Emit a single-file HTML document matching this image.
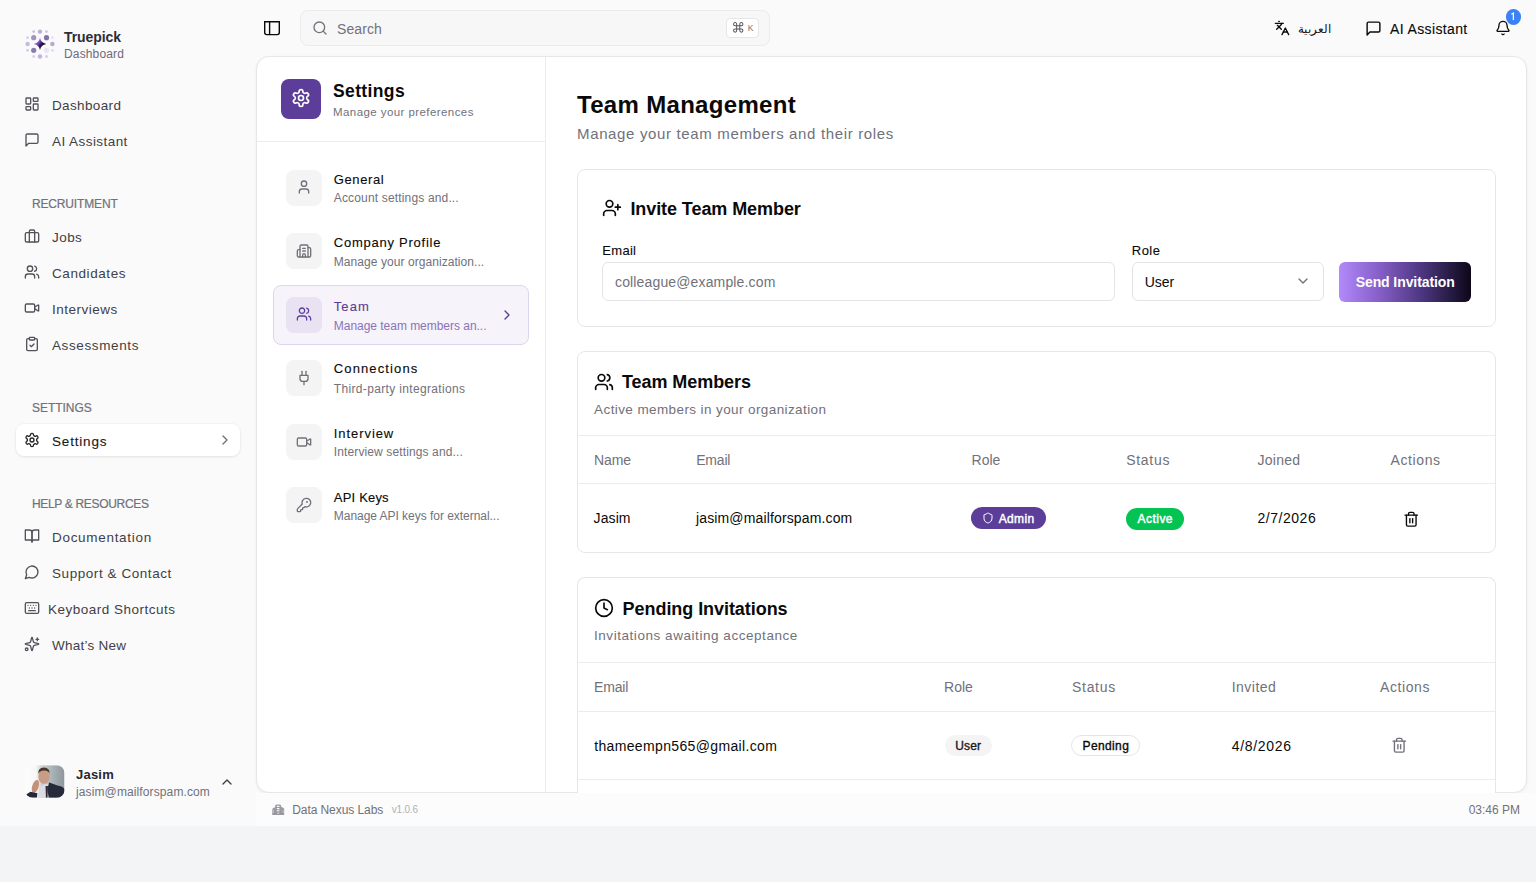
<!DOCTYPE html>
<html><head><meta charset="utf-8"><title>Team Management</title>
<style>
html,body{margin:0;padding:0;}
body{width:1536px;height:882px;position:relative;overflow:hidden;background:#fafafa;font-family:"Liberation Sans",sans-serif;}
.t{position:absolute;white-space:nowrap;line-height:1;}
.b{position:absolute;}
.i{position:absolute;overflow:visible;}
</style></head><body>
<div class="b" style="left:0px;top:826px;width:1536px;height:56px;background:#f3f4f6;"></div>
<div class="b" style="left:256px;top:793px;width:1280px;height:33px;background:#fcfcfc;"></div>
<div class="b" style="left:256px;top:56px;width:1271px;height:737px;background:#fff;border:1px solid #e7e7e9;border-radius:13px;box-shadow:0 1px 3px rgba(0,0,0,0.06);box-sizing:border-box;"></div>
<div class="b" style="left:545px;top:57px;width:1px;height:736px;background:#ececee;"></div>
<div class="b" style="left:257px;top:140.5px;width:288px;height:1px;background:#ececee;"></div>
<svg class="i" style="left:0;top:0;width:80px;height:80px" viewBox="0 0 80 80"><defs><linearGradient id="sg" x1="0.05" y1="0.2" x2="0.85" y2="0.8"><stop offset="0" stop-color="#b88aff"/><stop offset="0.3" stop-color="#9465ea"/><stop offset="0.6" stop-color="#3a2070"/><stop offset="0.8" stop-color="#0c0518"/><stop offset="1" stop-color="#05020a"/></linearGradient></defs><circle cx="33.7" cy="31.6" r="1.4" fill="#cbbfe0"/><circle cx="40.0" cy="31.6" r="2.2" fill="#bcaed8"/><circle cx="46.5" cy="31.6" r="1.4" fill="#cfc4e4"/><circle cx="27.6" cy="37.7" r="1.4" fill="#d6cdea"/><circle cx="33.7" cy="37.7" r="2.6" fill="#a494c6"/><circle cx="46.5" cy="37.7" r="2.6" fill="#8272a8"/><circle cx="52.4" cy="37.7" r="1.4" fill="#e8e1f4"/><circle cx="27.6" cy="44.0" r="2.2" fill="#c7b9e0"/><circle cx="52.4" cy="44.0" r="2.2" fill="#b8a8d6"/><circle cx="27.6" cy="50.3" r="1.4" fill="#d4c9e8"/><circle cx="33.7" cy="50.3" r="2.6" fill="#8a7cae"/><circle cx="46.5" cy="50.3" r="2.6" fill="#ebe4f7"/><circle cx="52.4" cy="50.3" r="1.4" fill="#e2d9f2"/><circle cx="33.7" cy="56.5" r="1.4" fill="#d8cdec"/><circle cx="40.0" cy="56.5" r="2.2" fill="#c3b3e0"/><circle cx="46.5" cy="56.5" r="1.4" fill="#d6cbea"/><path d="M40 37.6 Q40.8 43 46.2 43.9 Q40.8 44.8 40 50 Q39.2 44.8 33.6 43.9 Q39.2 43 40 37.6Z" fill="url(#sg)"/></svg>
<div class="t" style="top:30.15px;font-size:14px;color:#2f2c3a;left:64px;font-weight:700;letter-spacing:-0.070px;">Truepick</div>
<div class="t" style="top:47.84px;font-size:12px;color:#6e6a80;left:64px;letter-spacing:0.144px;">Dashboard</div>
<svg class="i" style="left:24px;top:96px;width:16px;height:16px;color:#52525b;" viewBox="0 0 24 24" fill="none" stroke="currentColor" stroke-width="2" stroke-linecap="round" stroke-linejoin="round"><rect width="7" height="9" x="3" y="3" rx="1"/><rect width="7" height="5" x="14" y="3" rx="1"/><rect width="7" height="9" x="14" y="12" rx="1"/><rect width="7" height="5" x="3" y="16" rx="1"/></svg>
<div class="t" style="top:98.57px;font-size:13.5px;color:#3f3f46;left:52px;letter-spacing:0.367px;">Dashboard</div>
<svg class="i" style="left:24px;top:132px;width:16px;height:16px;color:#52525b;" viewBox="0 0 24 24" fill="none" stroke="currentColor" stroke-width="2" stroke-linecap="round" stroke-linejoin="round"><path d="M21 15a2 2 0 0 1-2 2H7l-4 4V5a2 2 0 0 1 2-2h14a2 2 0 0 1 2 2z"/></svg>
<div class="t" style="top:134.57px;font-size:13.5px;color:#3f3f46;left:52px;letter-spacing:0.439px;">AI Assistant</div>
<div class="t" style="top:197.84px;font-size:12px;color:#71717a;left:32px;letter-spacing:-0.159px;-webkit-text-stroke:0.2px currentColor;">RECRUITMENT</div>
<svg class="i" style="left:24px;top:228px;width:16px;height:16px;color:#52525b;" viewBox="0 0 24 24" fill="none" stroke="currentColor" stroke-width="2" stroke-linecap="round" stroke-linejoin="round"><rect width="20" height="14" x="2" y="7" rx="2" ry="2"/><path d="M16 21V5a2 2 0 0 0-2-2h-4a2 2 0 0 0-2 2v16"/></svg>
<div class="t" style="top:230.57px;font-size:13.5px;color:#3f3f46;left:52px;letter-spacing:0.442px;">Jobs</div>
<svg class="i" style="left:24px;top:264px;width:16px;height:16px;color:#52525b;" viewBox="0 0 24 24" fill="none" stroke="currentColor" stroke-width="2" stroke-linecap="round" stroke-linejoin="round"><path d="M16 21v-2a4 4 0 0 0-4-4H6a4 4 0 0 0-4 4v2"/><circle cx="9" cy="7" r="4"/><path d="M22 21v-2a4 4 0 0 0-3-3.87"/><path d="M16 3.13a4 4 0 0 1 0 7.75"/></svg>
<div class="t" style="top:266.57px;font-size:13.5px;color:#3f3f46;left:52px;letter-spacing:0.576px;">Candidates</div>
<svg class="i" style="left:24px;top:300px;width:16px;height:16px;color:#52525b;" viewBox="0 0 24 24" fill="none" stroke="currentColor" stroke-width="2" stroke-linecap="round" stroke-linejoin="round"><path d="m16 13 5.223 3.482a.5.5 0 0 0 .777-.416V7.87a.5.5 0 0 0-.752-.432L16 10.5"/><rect x="2" y="6" width="14" height="12" rx="2"/></svg>
<div class="t" style="top:302.57px;font-size:13.5px;color:#3f3f46;left:52px;letter-spacing:0.510px;">Interviews</div>
<svg class="i" style="left:24px;top:336px;width:16px;height:16px;color:#52525b;" viewBox="0 0 24 24" fill="none" stroke="currentColor" stroke-width="2" stroke-linecap="round" stroke-linejoin="round"><rect width="8" height="4" x="8" y="2" rx="1" ry="1"/><path d="M16 4h2a2 2 0 0 1 2 2v14a2 2 0 0 1-2 2H6a2 2 0 0 1-2-2V6a2 2 0 0 1 2-2h2"/><path d="m9 14 2 2 4-4"/></svg>
<div class="t" style="top:338.57px;font-size:13.5px;color:#3f3f46;left:52px;letter-spacing:0.618px;">Assessments</div>
<div class="t" style="top:401.84px;font-size:12px;color:#71717a;left:32px;letter-spacing:-0.036px;-webkit-text-stroke:0.2px currentColor;">SETTINGS</div>
<div class="b" style="left:16px;top:424px;width:224px;height:32px;background:#fff;border-radius:8px;box-shadow:0 1px 3px rgba(0,0,0,0.08),0 0 0 1px rgba(0,0,0,0.02);"></div>
<svg class="i" style="left:24px;top:432px;width:16px;height:16px;color:#27272a;" viewBox="0 0 24 24" fill="none" stroke="currentColor" stroke-width="2" stroke-linecap="round" stroke-linejoin="round"><path d="M12.22 2h-.44a2 2 0 0 0-2 2v.18a2 2 0 0 1-1 1.73l-.43.25a2 2 0 0 1-2 0l-.15-.08a2 2 0 0 0-2.73.73l-.22.38a2 2 0 0 0 .73 2.73l.15.1a2 2 0 0 1 1 1.72v.51a2 2 0 0 1-1 1.74l-.15.09a2 2 0 0 0-.73 2.73l.22.38a2 2 0 0 0 2.73.73l.15-.08a2 2 0 0 1 2 0l.43.25a2 2 0 0 1 1 1.73V20a2 2 0 0 0 2 2h.44a2 2 0 0 0 2-2v-.18a2 2 0 0 1 1-1.73l.43-.25a2 2 0 0 1 2 0l.15.08a2 2 0 0 0 2.73-.73l.22-.39a2 2 0 0 0-.73-2.73l-.15-.08a2 2 0 0 1-1-1.74v-.5a2 2 0 0 1 1-1.74l.15-.09a2 2 0 0 0 .73-2.73l-.22-.38a2 2 0 0 0-2.73-.73l-.15.08a2 2 0 0 1-2 0l-.43-.25a2 2 0 0 1-1-1.73V4a2 2 0 0 0-2-2z"/><circle cx="12" cy="12" r="3"/></svg>
<div class="t" style="top:434.57px;font-size:13.5px;color:#18181b;left:52px;letter-spacing:0.813px;-webkit-text-stroke:0.1px currentColor;">Settings</div>
<svg class="i" style="left:217px;top:432.2px;width:16px;height:16px;color:#71717a;" viewBox="0 0 24 24" fill="none" stroke="currentColor" stroke-width="2" stroke-linecap="round" stroke-linejoin="round"><path d="m9 18 6-6-6-6"/></svg>
<div class="t" style="top:497.84px;font-size:12px;color:#71717a;left:32px;letter-spacing:-0.325px;-webkit-text-stroke:0.2px currentColor;">HELP &amp; RESOURCES</div>
<svg class="i" style="left:24px;top:528px;width:16px;height:16px;color:#52525b;" viewBox="0 0 24 24" fill="none" stroke="currentColor" stroke-width="2" stroke-linecap="round" stroke-linejoin="round"><path d="M2 3h6a4 4 0 0 1 4 4v14a3 3 0 0 0-3-3H2z"/><path d="M22 3h-6a4 4 0 0 0-4 4v14a3 3 0 0 1 3-3h7z"/></svg>
<div class="t" style="top:530.57px;font-size:13.5px;color:#3f3f46;left:52px;letter-spacing:0.695px;">Documentation</div>
<svg class="i" style="left:24px;top:564px;width:16px;height:16px;color:#52525b;" viewBox="0 0 24 24" fill="none" stroke="currentColor" stroke-width="2" stroke-linecap="round" stroke-linejoin="round"><path d="M7.9 20A9 9 0 1 0 4 16.1L2 22Z"/></svg>
<div class="t" style="top:566.57px;font-size:13.5px;color:#3f3f46;left:52px;letter-spacing:0.561px;">Support &amp; Contact</div>
<svg class="i" style="left:24px;top:600px;width:16px;height:16px;color:#52525b;" viewBox="0 0 24 24" fill="none" stroke="currentColor" stroke-width="2" stroke-linecap="round" stroke-linejoin="round"><path d="M10 8h.01"/><path d="M12 12h.01"/><path d="M14 8h.01"/><path d="M16 12h.01"/><path d="M18 8h.01"/><path d="M6 8h.01"/><path d="M7 16h10"/><path d="M8 12h.01"/><rect width="20" height="16" x="2" y="4" rx="2"/></svg>
<div class="t" style="top:602.57px;font-size:13.5px;color:#3f3f46;left:48px;letter-spacing:0.499px;">Keyboard Shortcuts</div>
<svg class="i" style="left:24px;top:636px;width:16px;height:16px;color:#52525b;" viewBox="0 0 24 24" fill="none" stroke="currentColor" stroke-width="2" stroke-linecap="round" stroke-linejoin="round"><path d="M9.937 15.5A2 2 0 0 0 8.5 14.063l-6.135-1.582a.5.5 0 0 1 0-.962L8.5 9.936A2 2 0 0 0 9.937 8.5l1.582-6.135a.5.5 0 0 1 .963 0L14.063 8.5A2 2 0 0 0 15.5 9.937l6.135 1.581a.5.5 0 0 1 0 .964L15.5 14.063a2 2 0 0 0-1.437 1.437l-1.582 6.135a.5.5 0 0 1-.963 0z"/><path d="M20 3v4"/><path d="M22 5h-4"/><circle cx="4" cy="20" r="2"/></svg>
<div class="t" style="top:638.57px;font-size:13.5px;color:#3f3f46;left:52px;letter-spacing:0.242px;">What&#8217;s New</div>
<svg class="i" style="left:24.5px;top:765px;width:39.5px;height:33px" viewBox="0 0 40 33"><defs><linearGradient id="ag" x1="0" y1="0" x2="1" y2="0"><stop offset="0" stop-color="#fdfdfd"/><stop offset="0.28" stop-color="#f6f7f7"/><stop offset="0.42" stop-color="#c9d0d3"/><stop offset="0.7" stop-color="#a8b1b5"/><stop offset="1" stop-color="#8d979b"/></linearGradient><clipPath id="ac"><rect width="40" height="33" rx="8"/></clipPath></defs><g clip-path="url(#ac)"><rect width="40" height="33" fill="url(#ag)"/><path d="M13 33 L15 22 L20 19 L26 19 L27 33 Z" fill="#dcdbe3"/><path d="M24.5 17.5 L33 20.5 Q40 22 40 25 V33 H24 L22.5 24 Z" fill="#272b39"/><path d="M20.8 21 L23.2 21 L22.8 33 L21.2 33 Z" fill="#2c2c33"/><ellipse cx="19.2" cy="11.6" rx="5.6" ry="7.4" fill="#c89c85"/><path d="M13.3 9 Q13 2.4 19.2 2.3 Q25.2 2.4 25 9 Q24 5.5 19.4 5.4 Q14.8 5.4 13.3 9Z" fill="#4a382c"/><ellipse cx="10.5" cy="21.5" rx="3.2" ry="6.8" transform="rotate(18 10.5 21.5)" fill="#c49079"/><path d="M0 30.5 L5.5 27 L12.5 28.5 L12 33 L0 33 Z" fill="#24273a"/></g></svg>
<div class="t" style="top:768.00px;font-size:13px;color:#27272a;left:76px;font-weight:700;letter-spacing:0.225px;">Jasim</div>
<div class="t" style="top:785.84px;font-size:12px;color:#71717a;left:76px;letter-spacing:0.116px;">jasim@mailforspam.com</div>
<svg class="i" style="left:218.6px;top:773.7px;width:16px;height:16px;color:#3f3f46;" viewBox="0 0 24 24" fill="none" stroke="currentColor" stroke-width="2" stroke-linecap="round" stroke-linejoin="round"><path d="m18 15-6-6-6 6"/></svg>
<svg class="i" style="left:258px;top:14px;width:30px;height:28px" viewBox="0 0 30 28" fill="none" stroke="#0a0a0a" stroke-width="1.4"><path d="M6.7 7.7 H21.3 V18.6 A2 2 0 0 1 19.3 20.6 H8.7 A2 2 0 0 1 6.7 18.6 Z"/><path d="M11.6 7.7 V20.6"/></svg>
<div class="b" style="left:300px;top:10.2px;width:469.5px;height:35.8px;background:#f7f7f8;border:1px solid #ececee;border-radius:8px;box-sizing:border-box;"></div>
<svg class="i" style="left:312px;top:20px;width:16px;height:16px;color:#71717a;" viewBox="0 0 24 24" fill="none" stroke="currentColor" stroke-width="2" stroke-linecap="round" stroke-linejoin="round"><circle cx="11" cy="11" r="8"/><path d="m21 21-4.3-4.3"/></svg>
<div class="t" style="top:22.15px;font-size:14px;color:#71717a;left:337px;letter-spacing:0.109px;">Search</div>
<div class="b" style="left:726px;top:18.3px;width:32.5px;height:19.3px;background:#fff;border:1px solid #e6e6e8;border-radius:4px;box-sizing:border-box;"></div>
<svg class="i" style="left:732.3px;top:20.6px;width:12.5px;height:12.8px" viewBox="0 0 24 24" preserveAspectRatio="none" fill="none" stroke="#52525b" stroke-width="1.9" stroke-linecap="round" stroke-linejoin="round"><path d="M15 6v12a3 3 0 1 0 3-3H6a3 3 0 1 0 3 3V6a3 3 0 1 0-3 3h12a3 3 0 1 0-3-3"/></svg>
<div class="t" style="top:23.90px;font-size:8.5px;color:#71717a;left:747.8px;">K</div>
<svg class="i" style="left:1274px;top:20px;width:16px;height:16px;color:#0a0a0a;" viewBox="0 0 24 24" fill="none" stroke="currentColor" stroke-width="2" stroke-linecap="round" stroke-linejoin="round"><path d="m5 8 6 6"/><path d="m4 14 6-6 2-3"/><path d="M2 5h12"/><path d="M7 2h1"/><path d="m22 22-5-10-5 10"/><path d="M14 18h6"/></svg>
<div class="t" style="top:22.84px;font-size:12px;color:#18181b;left:1298px;font-family:"Liberation Sans",sans-serif;">العربية</div>
<svg class="i" style="left:1365px;top:20px;width:17px;height:17px;color:#0a0a0a;" viewBox="0 0 24 24" fill="none" stroke="currentColor" stroke-width="2" stroke-linecap="round" stroke-linejoin="round"><path d="M21 15a2 2 0 0 1-2 2H7l-4 4V5a2 2 0 0 1 2-2h14a2 2 0 0 1 2 2z"/></svg>
<div class="t" style="top:21.85px;font-size:14px;color:#0a0a0a;left:1390px;letter-spacing:0.370px;-webkit-text-stroke:0.12px currentColor;">AI Assistant</div>
<svg class="i" style="left:1494.6px;top:19.5px;width:16px;height:16px;color:#0a0a0a;" viewBox="0 0 24 24" fill="none" stroke="currentColor" stroke-width="2" stroke-linecap="round" stroke-linejoin="round"><path d="M10.268 21a2 2 0 0 0 3.464 0"/><path d="M3.262 15.326A1 1 0 0 0 4 17h16a1 1 0 0 0 .74-1.673C19.41 13.956 18 12.499 18 8A6 6 0 0 0 6 8c0 4.499-1.411 5.956-2.738 7.326"/></svg>
<div class="b" style="left:1505.6px;top:9.4px;width:15.6px;height:15.6px;background:#3b82f6;border-radius:50%;"></div>
<svg class="i" style="left:1500px;top:5px;width:26px;height:24px" viewBox="0 0 26 24" fill="none" stroke="#fff" stroke-width="1.25" stroke-linecap="butt" stroke-linejoin="miter"><path d="M11.4 9.3 L13.4 8.1 V15"/></svg>
<div class="b" style="left:281px;top:78.5px;width:40px;height:40px;background:#5c3d99;border-radius:8px;"></div>
<svg class="i" style="left:291px;top:88.3px;width:20px;height:20px;color:#fff;" viewBox="0 0 24 24" fill="none" stroke="currentColor" stroke-width="2" stroke-linecap="round" stroke-linejoin="round"><path d="M12.22 2h-.44a2 2 0 0 0-2 2v.18a2 2 0 0 1-1 1.73l-.43.25a2 2 0 0 1-2 0l-.15-.08a2 2 0 0 0-2.73.73l-.22.38a2 2 0 0 0 .73 2.73l.15.1a2 2 0 0 1 1 1.72v.51a2 2 0 0 1-1 1.74l-.15.09a2 2 0 0 0-.73 2.73l.22.38a2 2 0 0 0 2.73.73l.15-.08a2 2 0 0 1 2 0l.43.25a2 2 0 0 1 1 1.73V20a2 2 0 0 0 2 2h.44a2 2 0 0 0 2-2v-.18a2 2 0 0 1 1-1.73l.43-.25a2 2 0 0 1 2 0l.15.08a2 2 0 0 0 2.73-.73l.22-.39a2 2 0 0 0-.73-2.73l-.15-.08a2 2 0 0 1-1-1.74v-.5a2 2 0 0 1 1-1.74l.15-.09a2 2 0 0 0 .73-2.73l-.22-.38a2 2 0 0 0-2.73-.73l-.15.08a2 2 0 0 1-2 0l-.43-.25a2 2 0 0 1-1-1.73V4a2 2 0 0 0-2-2z"/><circle cx="12" cy="12" r="3"/></svg>
<div class="t" style="top:82.69px;font-size:17.5px;color:#0a0a0a;left:333px;font-weight:700;letter-spacing:0.371px;">Settings</div>
<div class="t" style="top:106.77px;font-size:11.5px;color:#71717a;left:333px;letter-spacing:0.424px;">Manage your preferences</div>
<div class="b" style="left:286px;top:169.7px;width:36px;height:36px;background:#f4f4f5;border-radius:8px;"></div>
<svg class="i" style="left:295.5px;top:179.39999999999998px;width:16px;height:16px;color:#71717a;" viewBox="0 0 24 24" fill="none" stroke="currentColor" stroke-width="2" stroke-linecap="round" stroke-linejoin="round"><path d="M19 21v-2a4 4 0 0 0-4-4H9a4 4 0 0 0-4 4v2"/><circle cx="12" cy="7" r="4"/></svg>
<div class="t" style="top:172.60px;font-size:13px;color:#0a0a0a;left:333.8px;letter-spacing:0.591px;-webkit-text-stroke:0.12px currentColor;">General</div>
<div class="t" style="top:191.64px;font-size:12px;color:#71717a;left:333.8px;letter-spacing:0.159px;">Account settings and...</div>
<div class="b" style="left:286px;top:233px;width:36px;height:36px;background:#f4f4f5;border-radius:8px;"></div>
<svg class="i" style="left:295.5px;top:242.7px;width:16px;height:16px;color:#71717a;" viewBox="0 0 24 24" fill="none" stroke="currentColor" stroke-width="2" stroke-linecap="round" stroke-linejoin="round"><path d="M10 12h4"/><path d="M10 8h4"/><path d="M14 21v-3a2 2 0 0 0-4 0v3"/><path d="M6 10H4a2 2 0 0 0-2 2v7a2 2 0 0 0 2 2h16a2 2 0 0 0 2-2V9a2 2 0 0 0-2-2h-2"/><path d="M6 21V5a2 2 0 0 1 2-2h8a2 2 0 0 1 2 2v16"/></svg>
<div class="t" style="top:235.60px;font-size:13px;color:#0a0a0a;left:333.8px;letter-spacing:0.752px;-webkit-text-stroke:0.12px currentColor;">Company Profile</div>
<div class="t" style="top:255.54px;font-size:12px;color:#71717a;left:333.8px;letter-spacing:0.062px;">Manage your organization...</div>
<div class="b" style="left:273px;top:285px;width:256px;height:60px;background:#f6f3fa;border:1px solid #ddd5ee;border-radius:8px;box-sizing:border-box;"></div>
<div class="b" style="left:286px;top:296.8px;width:36px;height:36px;background:#e8e2f3;border-radius:8px;"></div>
<svg class="i" style="left:295.5px;top:306.0px;width:16px;height:16px;color:#5c3d99;" viewBox="0 0 24 24" fill="none" stroke="currentColor" stroke-width="1.9" stroke-linecap="round" stroke-linejoin="round"><path d="M16 21v-2a4 4 0 0 0-4-4H6a4 4 0 0 0-4 4v2"/><circle cx="9" cy="7" r="4"/><path d="M22 21v-2a4 4 0 0 0-3-3.87"/><path d="M16 3.13a4 4 0 0 1 0 7.75"/></svg>
<div class="t" style="top:299.80px;font-size:13px;color:#5c3d99;left:333.8px;letter-spacing:1.051px;-webkit-text-stroke:0.12px currentColor;">Team</div>
<div class="t" style="top:319.84px;font-size:12px;color:#8a74b6;left:333.8px;letter-spacing:-0.030px;">Manage team members an...</div>
<svg class="i" style="left:499.4px;top:306.7px;width:16px;height:16px;color:#5c3d99;" viewBox="0 0 24 24" fill="none" stroke="currentColor" stroke-width="2" stroke-linecap="round" stroke-linejoin="round"><path d="m9 18 6-6-6-6"/></svg>
<div class="b" style="left:286px;top:360px;width:36px;height:36px;background:#f4f4f5;border-radius:8px;"></div>
<svg class="i" style="left:295.5px;top:369.7px;width:16px;height:16px;color:#71717a;" viewBox="0 0 24 24" fill="none" stroke="currentColor" stroke-width="2" stroke-linecap="round" stroke-linejoin="round"><path d="M12 22v-5"/><path d="M9 8V2"/><path d="M15 8V2"/><path d="M18 8v5a4 4 0 0 1-4 4h-4a4 4 0 0 1-4-4V8Z"/></svg>
<div class="t" style="top:362.20px;font-size:13px;color:#0a0a0a;left:333.8px;letter-spacing:1.118px;-webkit-text-stroke:0.12px currentColor;">Connections</div>
<div class="t" style="top:383.04px;font-size:12px;color:#71717a;left:333.8px;letter-spacing:0.343px;">Third-party integrations</div>
<div class="b" style="left:286px;top:424.1px;width:36px;height:36px;background:#f4f4f5;border-radius:8px;"></div>
<svg class="i" style="left:295.5px;top:433.8px;width:16px;height:16px;color:#71717a;" viewBox="0 0 24 24" fill="none" stroke="currentColor" stroke-width="2" stroke-linecap="round" stroke-linejoin="round"><path d="m16 13 5.223 3.482a.5.5 0 0 0 .777-.416V7.87a.5.5 0 0 0-.752-.432L16 10.5"/><rect x="2" y="6" width="14" height="12" rx="2"/></svg>
<div class="t" style="top:426.80px;font-size:13px;color:#0a0a0a;left:333.8px;letter-spacing:0.930px;-webkit-text-stroke:0.12px currentColor;">Interview</div>
<div class="t" style="top:446.44px;font-size:12px;color:#71717a;left:333.8px;letter-spacing:0.119px;">Interview settings and...</div>
<div class="b" style="left:286px;top:487px;width:36px;height:36px;background:#f4f4f5;border-radius:8px;"></div>
<svg class="i" style="left:295.5px;top:496.7px;width:16px;height:16px;color:#71717a;" viewBox="0 0 24 24" fill="none" stroke="currentColor" stroke-width="2" stroke-linecap="round" stroke-linejoin="round"><path d="M2.586 17.414A2 2 0 0 0 2 18.828V21a1 1 0 0 0 1 1h3a1 1 0 0 0 1-1v-1a1 1 0 0 1 1-1h1a1 1 0 0 0 1-1v-1a1 1 0 0 1 1-1h.172a2 2 0 0 0 1.414-.586l.814-.814a6.5 6.5 0 1 0-4-4z"/><circle cx="16.5" cy="7.5" r=".5" fill="currentColor"/></svg>
<div class="t" style="top:490.90px;font-size:13px;color:#0a0a0a;left:333.8px;letter-spacing:0.191px;-webkit-text-stroke:0.12px currentColor;">API Keys</div>
<div class="t" style="top:510.44px;font-size:12px;color:#71717a;left:333.8px;letter-spacing:-0.035px;">Manage API keys for external...</div>
<div class="t" style="top:93.48px;font-size:24px;color:#0a0a0a;left:577px;font-weight:700;letter-spacing:0.316px;">Team Management</div>
<div class="t" style="top:125.80px;font-size:15px;color:#71717a;left:577px;letter-spacing:0.648px;">Manage your team members and their roles</div>
<div class="b" style="left:577px;top:169px;width:918.5px;height:158px;background:#fff;border:1px solid #e7e7e9;border-radius:8px;box-sizing:border-box;"></div>
<svg class="i" style="left:601.5px;top:198px;width:20px;height:20px;color:#0a0a0a;" viewBox="0 0 24 24" fill="none" stroke="currentColor" stroke-width="2" stroke-linecap="round" stroke-linejoin="round"><path d="M16 21v-2a4 4 0 0 0-4-4H6a4 4 0 0 0-4 4v2"/><circle cx="9" cy="7" r="4"/><line x1="19" x2="19" y1="8" y2="14"/><line x1="22" x2="16" y1="11" y2="11"/></svg>
<div class="t" style="top:199.56px;font-size:18px;color:#0a0a0a;left:630.4px;font-weight:700;letter-spacing:-0.076px;">Invite Team Member</div>
<div class="t" style="top:243.70px;font-size:13px;color:#0a0a0a;left:602.3px;letter-spacing:0.297px;-webkit-text-stroke:0.12px currentColor;">Email</div>
<div class="b" style="left:602px;top:262.2px;width:513px;height:39.2px;background:#fff;border:1px solid #e4e4e7;border-radius:6px;box-sizing:border-box;"></div>
<div class="t" style="top:275.15px;font-size:14px;color:#71717a;left:615px;letter-spacing:0.146px;">colleague@example.com</div>
<div class="t" style="top:243.70px;font-size:13px;color:#0a0a0a;left:1131.8px;letter-spacing:0.463px;-webkit-text-stroke:0.12px currentColor;">Role</div>
<div class="b" style="left:1131.8px;top:262.2px;width:192px;height:39.2px;background:#fff;border:1px solid #e4e4e7;border-radius:6px;box-sizing:border-box;"></div>
<div class="t" style="top:274.95px;font-size:14px;color:#0a0a0a;left:1144.8px;letter-spacing:-0.037px;">User</div>
<svg class="i" style="left:1294.7px;top:272.9px;width:16px;height:16px;color:#71717a;" viewBox="0 0 24 24" fill="none" stroke="currentColor" stroke-width="2" stroke-linecap="round" stroke-linejoin="round"><path d="m6 9 6 6 6-6"/></svg>
<div class="b" style="left:1339.2px;top:261.9px;width:131.4px;height:39.7px;background:linear-gradient(90deg,#b189fa 0%,#8a62cc 28%,#4e3782 62%,#0c0818 100%);border-radius:6px;"></div>
<div class="t" style="top:274.95px;font-size:14px;color:#fff;left:1355.7px;font-weight:700;letter-spacing:-0.086px;">Send Invitation</div>
<div class="b" style="left:577px;top:350.5px;width:918.5px;height:202px;background:#fff;border:1px solid #e7e7e9;border-radius:8px;box-sizing:border-box;"></div>
<svg class="i" style="left:594px;top:371.5px;width:20px;height:20px;color:#0a0a0a;" viewBox="0 0 24 24" fill="none" stroke="currentColor" stroke-width="2" stroke-linecap="round" stroke-linejoin="round"><path d="M16 21v-2a4 4 0 0 0-4-4H6a4 4 0 0 0-4 4v2"/><circle cx="9" cy="7" r="4"/><path d="M22 21v-2a4 4 0 0 0-3-3.87"/><path d="M16 3.13a4 4 0 0 1 0 7.75"/></svg>
<div class="t" style="top:372.96px;font-size:18px;color:#0a0a0a;left:622px;font-weight:700;letter-spacing:-0.071px;">Team Members</div>
<div class="t" style="top:403.17px;font-size:13.5px;color:#71717a;left:594.1px;letter-spacing:0.398px;">Active members in your organization</div>
<div class="b" style="left:578px;top:435px;width:916.5px;height:1px;background:#ececee;"></div>
<div class="t" style="top:453.15px;font-size:14px;color:#71717a;left:594px;letter-spacing:-0.082px;">Name</div>
<div class="t" style="top:453.15px;font-size:14px;color:#71717a;left:696.2px;letter-spacing:-0.180px;">Email</div>
<div class="t" style="top:453.15px;font-size:14px;color:#71717a;left:971.5px;letter-spacing:0.030px;">Role</div>
<div class="t" style="top:453.15px;font-size:14px;color:#71717a;left:1126.2px;letter-spacing:0.702px;">Status</div>
<div class="t" style="top:453.15px;font-size:14px;color:#71717a;left:1257.4px;letter-spacing:0.294px;">Joined</div>
<div class="t" style="top:453.15px;font-size:14px;color:#71717a;left:1390.6px;letter-spacing:0.585px;">Actions</div>
<div class="b" style="left:578px;top:483.3px;width:916.5px;height:1px;background:#ececee;"></div>
<div class="t" style="top:511.15px;font-size:14px;color:#0a0a0a;left:593.6px;letter-spacing:0.091px;">Jasim</div>
<div class="t" style="top:511.15px;font-size:14px;color:#0a0a0a;left:696px;letter-spacing:0.138px;">jasim@mailforspam.com</div>
<div class="b" style="left:971.1px;top:507.4px;width:74.6px;height:21.5px;background:#5c3d99;border-radius:11px;"></div>
<svg class="i" style="left:982px;top:512px;width:12px;height:12px;color:#fff;" viewBox="0 0 24 24" fill="none" stroke="currentColor" stroke-width="2" stroke-linecap="round" stroke-linejoin="round"><path d="M20 13c0 5-3.5 7.5-7.66 8.95a1 1 0 0 1-.67-.01C7.5 20.5 4 18 4 13V6a1 1 0 0 1 1-1c2 0 4.5-1.2 6.24-2.72a1.17 1.17 0 0 1 1.52 0C14.51 3.81 17 5 19 5a1 1 0 0 1 1 1z"/></svg>
<div class="t" style="top:512.84px;font-size:12px;color:#fff;left:998.8px;letter-spacing:0.317px;-webkit-text-stroke:0.45px currentColor;">Admin</div>
<div class="b" style="left:1125.8px;top:508.4px;width:58.2px;height:21.4px;background:#03c353;border-radius:11px;"></div>
<div class="t" style="top:513.34px;font-size:12px;color:#fff;left:1137.5px;letter-spacing:0.471px;-webkit-text-stroke:0.45px currentColor;">Active</div>
<div class="t" style="top:511.15px;font-size:14px;color:#0a0a0a;left:1257.4px;letter-spacing:0.541px;">2/7/2026</div>
<svg class="i" style="left:1402.6px;top:510.6px;width:16.5px;height:16.5px;color:#0a0a0a;" viewBox="0 0 24 24" fill="none" stroke="currentColor" stroke-width="2" stroke-linecap="round" stroke-linejoin="round"><path d="M3 6h18"/><path d="M19 6v14c0 1-1 2-2 2H7c-1 0-2-1-2-2V6"/><path d="M8 6V4c0-1 1-2 2-2h4c1 0 2 1 2 2v2"/><line x1="10" x2="10" y1="11" y2="17"/><line x1="14" x2="14" y1="11" y2="17"/></svg>
<div class="b" style="left:577px;top:577.3px;width:918.5px;height:215.7px;background:#fff;border:1px solid #e7e7e9;border-radius:8px;box-sizing:border-box;border-bottom:none;border-bottom-left-radius:0;border-bottom-right-radius:0;"></div>
<svg class="i" style="left:593.8px;top:597.8px;width:20px;height:20px;color:#0a0a0a;" viewBox="0 0 24 24" fill="none" stroke="currentColor" stroke-width="2" stroke-linecap="round" stroke-linejoin="round"><circle cx="12" cy="12" r="10"/><polyline points="12 6 12 12 16 14"/></svg>
<div class="t" style="top:599.76px;font-size:18px;color:#0a0a0a;left:622.6px;font-weight:700;letter-spacing:-0.056px;">Pending Invitations</div>
<div class="t" style="top:629.17px;font-size:13.5px;color:#71717a;left:594px;letter-spacing:0.549px;">Invitations awaiting acceptance</div>
<div class="b" style="left:578px;top:662px;width:916.5px;height:1px;background:#ececee;"></div>
<div class="t" style="top:679.75px;font-size:14px;color:#71717a;left:594px;letter-spacing:-0.180px;">Email</div>
<div class="t" style="top:679.75px;font-size:14px;color:#71717a;left:944px;letter-spacing:0.030px;">Role</div>
<div class="t" style="top:679.75px;font-size:14px;color:#71717a;left:1072px;letter-spacing:0.702px;">Status</div>
<div class="t" style="top:679.75px;font-size:14px;color:#71717a;left:1231.7px;letter-spacing:0.481px;">Invited</div>
<div class="t" style="top:679.75px;font-size:14px;color:#71717a;left:1380px;letter-spacing:0.585px;">Actions</div>
<div class="b" style="left:578px;top:710.6px;width:916.5px;height:1px;background:#ececee;"></div>
<div class="t" style="top:739.15px;font-size:14px;color:#0a0a0a;left:594.2px;letter-spacing:0.354px;">thameempn565@gmail.com</div>
<div class="b" style="left:944.5px;top:735px;width:47.5px;height:21px;background:#f4f4f5;border-radius:11px;"></div>
<div class="t" style="top:739.84px;font-size:12px;color:#18181b;left:955.2px;letter-spacing:0.164px;-webkit-text-stroke:0.35px currentColor;">User</div>
<div class="b" style="left:1071.4px;top:735px;width:68.3px;height:21px;background:#fff;border:1px solid #e4e4e7;border-radius:11px;box-sizing:border-box;"></div>
<div class="t" style="top:739.84px;font-size:12px;color:#0a0a0a;left:1082.5px;letter-spacing:0.381px;-webkit-text-stroke:0.35px currentColor;">Pending</div>
<div class="t" style="top:739.15px;font-size:14px;color:#0a0a0a;left:1231.7px;letter-spacing:0.691px;">4/8/2026</div>
<svg class="i" style="left:1391.2px;top:737.4px;width:16.5px;height:16.5px;color:#71717a;" viewBox="0 0 24 24" fill="none" stroke="currentColor" stroke-width="2" stroke-linecap="round" stroke-linejoin="round"><path d="M3 6h18"/><path d="M19 6v14c0 1-1 2-2 2H7c-1 0-2-1-2-2V6"/><path d="M8 6V4c0-1 1-2 2-2h4c1 0 2 1 2 2v2"/><line x1="10" x2="10" y1="11" y2="17"/><line x1="14" x2="14" y1="11" y2="17"/></svg>
<div class="b" style="left:578px;top:779px;width:916.5px;height:1px;background:#ececee;"></div>
<div class="b" style="left:256px;top:793px;width:1280px;height:33px;background:#fcfcfc;"></div>
<svg class="i" style="left:272px;top:803.5px;width:12.5px;height:11px" viewBox="0 0 12.5 11"><path d="M0.3 10.5 V5.6 Q0.3 3.6 2.3 3.4 L3.1 3.3 V2 Q3.1 0.5 4.7 0.5 H7.6 Q9.2 0.5 9.2 2 V3.1 L10.2 3.2 Q12.2 3.4 12.2 5.4 V9.2 Q12.2 10.5 10.8 10.5 Z" fill="#9b9ba3"/><path d="M1.3 6 V9.3 M11.2 6 V9.3" stroke="#c4c4ca" stroke-width="0.9"/><path d="M4.9 2.4 H7.4 M4.9 4.6 H7.4 M4.9 6.8 H7.4" stroke="#fcfcfc" stroke-width="1.1"/><path d="M5 8.6 H7.3 V10.2 H5Z" fill="#d9d9de"/><path d="M0.3 10.2 H12.2" stroke="#85858d" stroke-width="1"/></svg>
<div class="t" style="top:803.59px;font-size:12px;color:#71717a;left:292.2px;letter-spacing:-0.069px;">Data Nexus Labs</div>
<div class="t" style="top:805.29px;font-size:10px;color:#b0b0b8;left:391.8px;letter-spacing:-0.208px;">v1.0.6</div>
<div class="t" style="top:803.64px;font-size:12px;color:#71717a;right:16px;">03:46 PM</div>
</body></html>
